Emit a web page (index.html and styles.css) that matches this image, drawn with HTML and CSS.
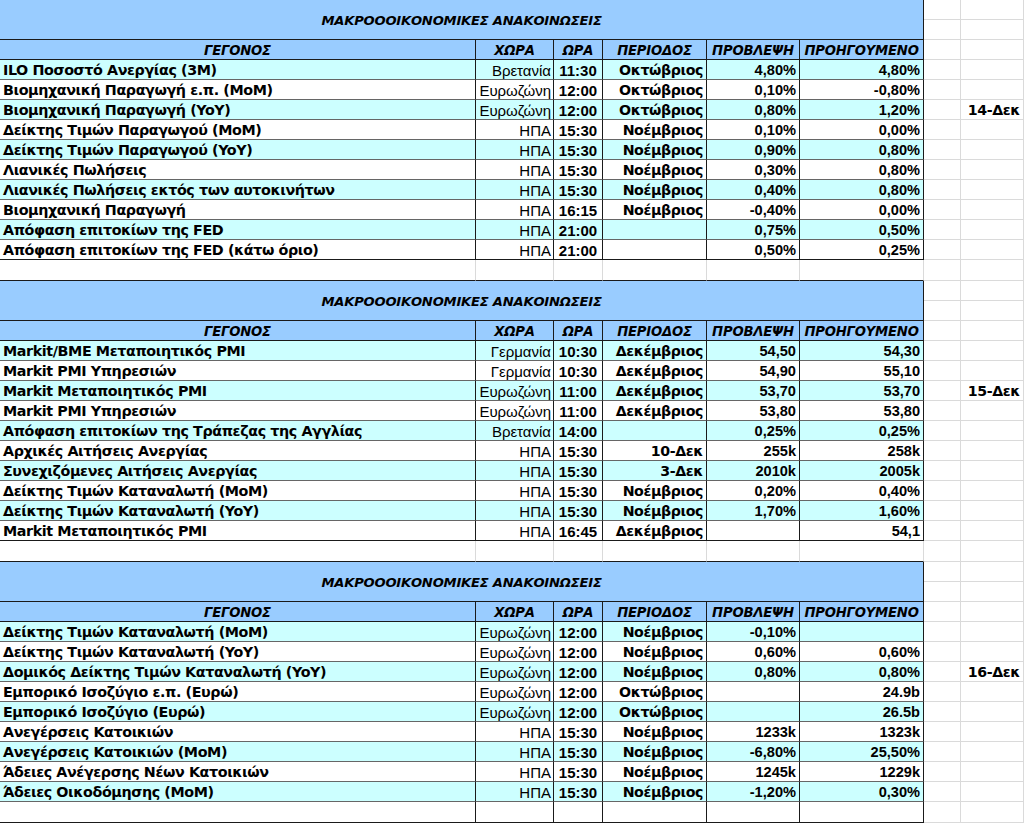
FILE: index.html
```html
<!DOCTYPE html>
<html lang="el">
<head>
<meta charset="utf-8">
<title>Μακροοικονομικές ανακοινώσεις</title>
<link rel="stylesheet" href="styles.css">
</head>
<body>
<table class="sheet">
<colgroup>
<col class="c-a"><col class="c-b"><col class="c-c"><col class="c-d"><col class="c-e"><col class="c-f"><col class="c-g"><col class="c-h">
</colgroup>
<tbody>
<!-- Section 1 -->
<tr class="r-title"><td class="title" colspan="6" rowspan="2">ΜΑΚΡΟΟΟΙΚΟΝΟΜΙΚΕΣ ΑΝΑΚΟΙΝΩΣΕΙΣ</td><td class="g"></td><td class="g"></td></tr>
<tr class="r-title"><td class="g"></td><td class="g"></td></tr>
<tr class="r-head"><td class="hd">ΓΕΓΟΝΟΣ</td><td class="hd">ΧΩΡΑ</td><td class="hd">ΩΡΑ</td><td class="hd">ΠΕΡΙΟΔΟΣ</td><td class="hd">ΠΡΟΒΛΕΨΗ</td><td class="hd">ΠΡΟΗΓΟΥΜΕΝΟ</td><td class="g"></td><td class="g"></td></tr>
<tr class="row odd"><td class="ev">ILO Ποσοστό Ανεργίας (3M)</td><td class="co">Βρετανία</td><td class="tm">11:30</td><td class="pe">Οκτώβριος</td><td class="nu">4,80%</td><td class="nu">4,80%</td><td class="g"></td><td class="g"></td></tr>
<tr class="row"><td class="ev">Βιομηχανική Παραγωγή ε.π. (MoM)</td><td class="co">Ευρωζώνη</td><td class="tm">12:00</td><td class="pe">Οκτώβριος</td><td class="nu">0,10%</td><td class="nu">-0,80%</td><td class="g"></td><td class="g"></td></tr>
<tr class="row odd"><td class="ev">Βιομηχανική Παραγωγή (YoY)</td><td class="co">Ευρωζώνη</td><td class="tm">12:00</td><td class="pe">Οκτώβριος</td><td class="nu">0,80%</td><td class="nu">1,20%</td><td class="g"></td><td class="g date">14-Δεκ</td></tr>
<tr class="row"><td class="ev">Δείκτης Τιμών Παραγωγού (MoM)</td><td class="co">ΗΠΑ</td><td class="tm">15:30</td><td class="pe">Νοέμβριος</td><td class="nu">0,10%</td><td class="nu">0,00%</td><td class="g"></td><td class="g"></td></tr>
<tr class="row odd"><td class="ev">Δείκτης Τιμών Παραγωγού (YoY)</td><td class="co">ΗΠΑ</td><td class="tm">15:30</td><td class="pe">Νοέμβριος</td><td class="nu">0,90%</td><td class="nu">0,80%</td><td class="g"></td><td class="g"></td></tr>
<tr class="row"><td class="ev">Λιανικές Πωλήσεις</td><td class="co">ΗΠΑ</td><td class="tm">15:30</td><td class="pe">Νοέμβριος</td><td class="nu">0,30%</td><td class="nu">0,80%</td><td class="g"></td><td class="g"></td></tr>
<tr class="row odd"><td class="ev">Λιανικές Πωλήσεις εκτός των αυτοκινήτων</td><td class="co">ΗΠΑ</td><td class="tm">15:30</td><td class="pe">Νοέμβριος</td><td class="nu">0,40%</td><td class="nu">0,80%</td><td class="g"></td><td class="g"></td></tr>
<tr class="row"><td class="ev">Βιομηχανική Παραγωγή</td><td class="co">ΗΠΑ</td><td class="tm">16:15</td><td class="pe">Νοέμβριος</td><td class="nu">-0,40%</td><td class="nu">0,00%</td><td class="g"></td><td class="g"></td></tr>
<tr class="row odd"><td class="ev">Απόφαση επιτοκίων της FED</td><td class="co">ΗΠΑ</td><td class="tm">21:00</td><td class="pe"></td><td class="nu">0,75%</td><td class="nu">0,50%</td><td class="g"></td><td class="g"></td></tr>
<tr class="row last"><td class="ev">Απόφαση επιτοκίων της FED (κάτω όριο)</td><td class="co">ΗΠΑ</td><td class="tm">21:00</td><td class="pe"></td><td class="nu">0,50%</td><td class="nu">0,25%</td><td class="g"></td><td class="g"></td></tr>
<tr class="r-blank"><td class="b"></td><td class="b"></td><td class="b"></td><td class="b"></td><td class="b"></td><td class="b"></td><td class="g"></td><td class="g"></td></tr>

<!-- Section 2 -->
<tr class="r-title"><td class="title" colspan="6" rowspan="2">ΜΑΚΡΟΟΟΙΚΟΝΟΜΙΚΕΣ ΑΝΑΚΟΙΝΩΣΕΙΣ</td><td class="g"></td><td class="g"></td></tr>
<tr class="r-title"><td class="g"></td><td class="g"></td></tr>
<tr class="r-head"><td class="hd">ΓΕΓΟΝΟΣ</td><td class="hd">ΧΩΡΑ</td><td class="hd">ΩΡΑ</td><td class="hd">ΠΕΡΙΟΔΟΣ</td><td class="hd">ΠΡΟΒΛΕΨΗ</td><td class="hd">ΠΡΟΗΓΟΥΜΕΝΟ</td><td class="g"></td><td class="g"></td></tr>
<tr class="row odd"><td class="ev">Markit/BME Μεταποιητικός PMI</td><td class="co">Γερμανία</td><td class="tm">10:30</td><td class="pe">Δεκέμβριος</td><td class="nu">54,50</td><td class="nu">54,30</td><td class="g"></td><td class="g"></td></tr>
<tr class="row"><td class="ev">Markit PMI Υπηρεσιών</td><td class="co">Γερμανία</td><td class="tm">10:30</td><td class="pe">Δεκέμβριος</td><td class="nu">54,90</td><td class="nu">55,10</td><td class="g"></td><td class="g"></td></tr>
<tr class="row odd"><td class="ev">Markit Μεταποιητικός PMI</td><td class="co">Ευρωζώνη</td><td class="tm">11:00</td><td class="pe">Δεκέμβριος</td><td class="nu">53,70</td><td class="nu">53,70</td><td class="g"></td><td class="g date">15-Δεκ</td></tr>
<tr class="row"><td class="ev">Markit PMI Υπηρεσιών</td><td class="co">Ευρωζώνη</td><td class="tm">11:00</td><td class="pe">Δεκέμβριος</td><td class="nu">53,80</td><td class="nu">53,80</td><td class="g"></td><td class="g"></td></tr>
<tr class="row odd"><td class="ev">Απόφαση επιτοκίων της Τράπεζας της Αγγλίας</td><td class="co">Βρετανία</td><td class="tm">14:00</td><td class="pe"></td><td class="nu">0,25%</td><td class="nu">0,25%</td><td class="g"></td><td class="g"></td></tr>
<tr class="row"><td class="ev">Αρχικές Αιτήσεις Ανεργίας</td><td class="co">ΗΠΑ</td><td class="tm">15:30</td><td class="pe">10-Δεκ</td><td class="nu">255k</td><td class="nu">258k</td><td class="g"></td><td class="g"></td></tr>
<tr class="row odd"><td class="ev">Συνεχιζόμενες Αιτήσεις Ανεργίας</td><td class="co">ΗΠΑ</td><td class="tm">15:30</td><td class="pe">3-Δεκ</td><td class="nu">2010k</td><td class="nu">2005k</td><td class="g"></td><td class="g"></td></tr>
<tr class="row"><td class="ev">Δείκτης Τιμών Καταναλωτή (MoM)</td><td class="co">ΗΠΑ</td><td class="tm">15:30</td><td class="pe">Νοέμβριος</td><td class="nu">0,20%</td><td class="nu">0,40%</td><td class="g"></td><td class="g"></td></tr>
<tr class="row odd"><td class="ev">Δείκτης Τιμών Καταναλωτή (YoY)</td><td class="co">ΗΠΑ</td><td class="tm">15:30</td><td class="pe">Νοέμβριος</td><td class="nu">1,70%</td><td class="nu">1,60%</td><td class="g"></td><td class="g"></td></tr>
<tr class="row last"><td class="ev">Markit Μεταποιητικός PMI</td><td class="co">ΗΠΑ</td><td class="tm">16:45</td><td class="pe">Δεκέμβριος</td><td class="nu"></td><td class="nu">54,1</td><td class="g"></td><td class="g"></td></tr>
<tr class="r-blank"><td class="b"></td><td class="b"></td><td class="b"></td><td class="b"></td><td class="b"></td><td class="b"></td><td class="g"></td><td class="g"></td></tr>

<!-- Section 3 -->
<tr class="r-title"><td class="title" colspan="6" rowspan="2">ΜΑΚΡΟΟΟΙΚΟΝΟΜΙΚΕΣ ΑΝΑΚΟΙΝΩΣΕΙΣ</td><td class="g"></td><td class="g"></td></tr>
<tr class="r-title"><td class="g"></td><td class="g"></td></tr>
<tr class="r-head"><td class="hd">ΓΕΓΟΝΟΣ</td><td class="hd">ΧΩΡΑ</td><td class="hd">ΩΡΑ</td><td class="hd">ΠΕΡΙΟΔΟΣ</td><td class="hd">ΠΡΟΒΛΕΨΗ</td><td class="hd">ΠΡΟΗΓΟΥΜΕΝΟ</td><td class="g"></td><td class="g"></td></tr>
<tr class="row odd"><td class="ev">Δείκτης Τιμών Καταναλωτή (MoM)</td><td class="co">Ευρωζώνη</td><td class="tm">12:00</td><td class="pe">Νοέμβριος</td><td class="nu">-0,10%</td><td class="nu"></td><td class="g"></td><td class="g"></td></tr>
<tr class="row"><td class="ev">Δείκτης Τιμών Καταναλωτή (YoY)</td><td class="co">Ευρωζώνη</td><td class="tm">12:00</td><td class="pe">Νοέμβριος</td><td class="nu">0,60%</td><td class="nu">0,60%</td><td class="g"></td><td class="g"></td></tr>
<tr class="row odd"><td class="ev">Δομικός Δείκτης Τιμών Καταναλωτή (YoY)</td><td class="co">Ευρωζώνη</td><td class="tm">12:00</td><td class="pe">Νοέμβριος</td><td class="nu">0,80%</td><td class="nu">0,80%</td><td class="g"></td><td class="g date">16-Δεκ</td></tr>
<tr class="row"><td class="ev">Εμπορικό Ισοζύγιο ε.π. (Ευρώ)</td><td class="co">Ευρωζώνη</td><td class="tm">12:00</td><td class="pe">Οκτώβριος</td><td class="nu"></td><td class="nu">24.9b</td><td class="g"></td><td class="g"></td></tr>
<tr class="row odd"><td class="ev">Εμπορικό Ισοζύγιο (Ευρώ)</td><td class="co">Ευρωζώνη</td><td class="tm">12:00</td><td class="pe">Οκτώβριος</td><td class="nu"></td><td class="nu">26.5b</td><td class="g"></td><td class="g"></td></tr>
<tr class="row"><td class="ev">Ανεγέρσεις Κατοικιών</td><td class="co">ΗΠΑ</td><td class="tm">15:30</td><td class="pe">Νοέμβριος</td><td class="nu">1233k</td><td class="nu">1323k</td><td class="g"></td><td class="g"></td></tr>
<tr class="row odd"><td class="ev">Ανεγέρσεις Κατοικιών (MoM)</td><td class="co">ΗΠΑ</td><td class="tm">15:30</td><td class="pe">Νοέμβριος</td><td class="nu">-6,80%</td><td class="nu">25,50%</td><td class="g"></td><td class="g"></td></tr>
<tr class="row"><td class="ev">Άδειες Ανέγερσης Νέων Κατοικιών</td><td class="co">ΗΠΑ</td><td class="tm">15:30</td><td class="pe">Νοέμβριος</td><td class="nu">1245k</td><td class="nu">1229k</td><td class="g"></td><td class="g"></td></tr>
<tr class="row odd"><td class="ev">Άδειες Οικοδόμησης (MoM)</td><td class="co">ΗΠΑ</td><td class="tm">15:30</td><td class="pe">Νοέμβριος</td><td class="nu">-1,20%</td><td class="nu">0,30%</td><td class="g"></td><td class="g"></td></tr>
<tr class="row last end"><td class="ev"></td><td class="co"></td><td class="tm"></td><td class="pe"></td><td class="nu"></td><td class="nu"></td><td class="g"></td><td class="g"></td></tr>
</tbody>
</table>
</body>
</html>
```

FILE: styles.css
```css
html, body {
  margin: 0;
  padding: 0;
  background: #ffffff;
}

body {
  width: 1024px;
  height: 824px;
  overflow: hidden;
  font-family: "DejaVu Sans", "Liberation Sans", sans-serif;
  color: #000;
}

.sheet {
  border-collapse: separate;
  border-spacing: 0;
  table-layout: fixed;
  width: 1024px;
}

.c-a { width: 476px; }
.c-b { width: 78px; }
.c-c { width: 49px; }
.c-d { width: 104px; }
.c-e { width: 93px; }
.c-f { width: 124px; }
.c-g { width: 37px; }
.c-h { width: 63px; }

.sheet td {
  box-sizing: border-box;
  height: 20px;
  padding: 2px 3px 0 3px;
  border-right: 1px solid #dadada;
  border-bottom: 1px solid #dadada;
  white-space: nowrap;
  overflow: hidden;
  vertical-align: middle;
  line-height: 17px;
}

.r-title td,
.r-head td,
.row td { height: 20px; }

.r-blank td { height: 21px; }

/* Title band */
.title {
  background: #99ccff;
  text-align: center;
  font-weight: bold;
  font-style: italic;
  font-size: 13.1px;
  letter-spacing: -0.2px;
  border-right-color: #1a1a1a !important;
  border-bottom-color: #1a1a1a !important;
}

/* Header row */
.hd {
  background: #99ccff;
  text-align: center;
  font-weight: bold;
  font-style: italic;
  font-size: 13.2px;
  letter-spacing: -0.2px;
  border-right-color: #1a1a1a !important;
  border-bottom-color: #1a1a1a !important;
}

/* Data rows */
.row td.ev,
.row td.co,
.row td.tm,
.row td.pe,
.row td.nu {
  background: #ffffff;
  border-right-color: #1a1a1a;
  border-bottom-color: #666666;
}

.row.odd td.ev,
.row.odd td.co,
.row.odd td.tm,
.row.odd td.pe,
.row.odd td.nu {
  background: #ccffff;
}

.row.last td.ev,
.row.last td.co,
.row.last td.tm,
.row.last td.pe,
.row.last td.nu {
  border-bottom-color: #1a1a1a;
}

.row.end td { height: 21px; }

.ev {
  font-weight: bold;
  font-size: 14.3px;
  letter-spacing: -0.4px;
  text-align: left;
}

.co {
  font-family: "Liberation Sans", Arial, sans-serif;
  font-size: 15px;
  text-align: right;
  padding-right: 2px !important;
}

.tm {
  font-family: "Liberation Sans", Arial, sans-serif;
  font-weight: bold;
  font-size: 15px;
  text-align: center;
}

.pe {
  font-weight: bold;
  font-size: 14.2px;
  letter-spacing: -0.4px;
  text-align: right;
  padding-right: 3px !important;
}

.nu {
  font-family: "Liberation Sans", Arial, sans-serif;
  font-weight: bold;
  font-size: 14.6px;
  text-align: right;
}

/* blank spacer rows: keep gridlines, dark bottom under the table columns */
.r-blank td.b {
  border-bottom-color: #1a1a1a;
}

.date {
  font-weight: bold;
  font-size: 14.2px;
  letter-spacing: -0.4px;
  text-align: right;
}
```
